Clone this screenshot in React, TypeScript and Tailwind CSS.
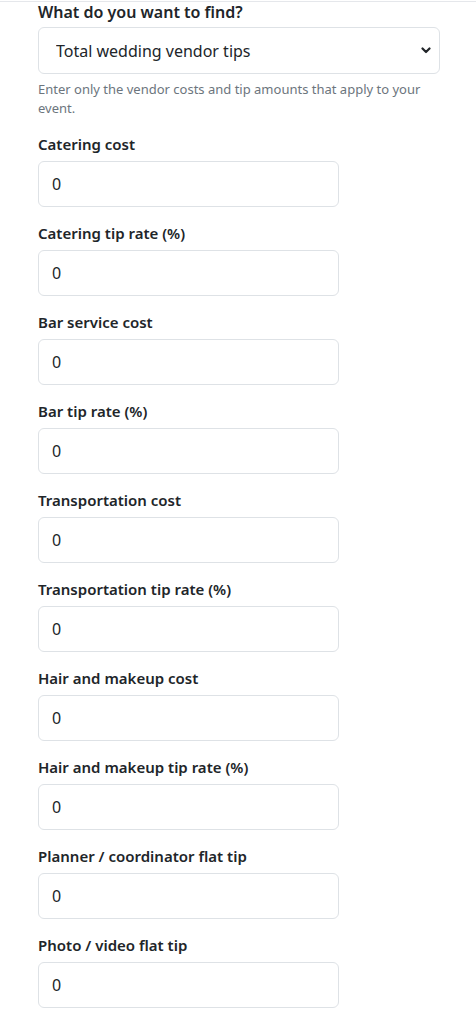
const fields = [
  "Catering cost",
  "Catering tip rate (%)",
  "Bar service cost",
  "Bar tip rate (%)",
  "Transportation cost",
  "Transportation tip rate (%)",
  "Hair and makeup cost",
  "Hair and makeup tip rate (%)",
  "Planner / coordinator flat tip",
  "Photo / video flat tip",
];

function Field({ label }: { label: string }) {
  const id = label.toLowerCase().replace(/[^a-z]+/g, "-");
  return (
    <div className="flex flex-col">
      <label htmlFor={id} className="text-[15px] leading-[22px] font-semibold text-[#212529]">
        {label}
      </label>
      <input
        id={id}
        type="text"
        defaultValue="0"
        className="mt-[6px] h-[46px] w-[301px] rounded-[6px] border border-[#dee2e6] bg-white px-[13px] text-[16px] text-[#212529] outline-none"
      />
    </div>
  );
}

export default function App() {
  return (
    <div className="min-h-screen bg-white font-['Noto_Sans',sans-serif]">
      <div className="mt-px border-t border-[#e5e7eb] px-[38px]">
        <div className="w-[402px]">
          <h2 className="text-[16px] leading-[20px] font-semibold text-[#212529]">What do you want to find?</h2>
          <div className="relative mt-[5px]">
            <select className="h-[47px] w-full appearance-none rounded-[6px] border border-[#dee2e6] bg-white pl-[17px] pr-10 text-[16px] text-[#212529] outline-none">
              <option>Total wedding vendor tips</option>
              <option>Catering tip</option>
              <option>Bar tip</option>
            </select>
            {/* chevron */}
            <svg
              className="pointer-events-none absolute right-[9px] top-[20px] h-[7px] w-[10px]"
              viewBox="0 0 10 7"
              fill="none"
              stroke="#212529"
              strokeWidth="2.2"
              strokeLinecap="round"
              strokeLinejoin="round"
            >
              <path d="M1.5 1.5 5 5l3.5-3.5" />
            </svg>
          </div>
          <p className="mt-[6px] text-[13px] leading-[19px] text-[#6c757d]">
            Enter only the vendor costs and tip amounts that apply to your event.
          </p>
        </div>

        <div className="mt-[15px] flex flex-col gap-[15px] pb-6">
          {fields.map((f) => (
            <Field key={f} label={f} />
          ))}
        </div>
      </div>
    </div>
  );
}
